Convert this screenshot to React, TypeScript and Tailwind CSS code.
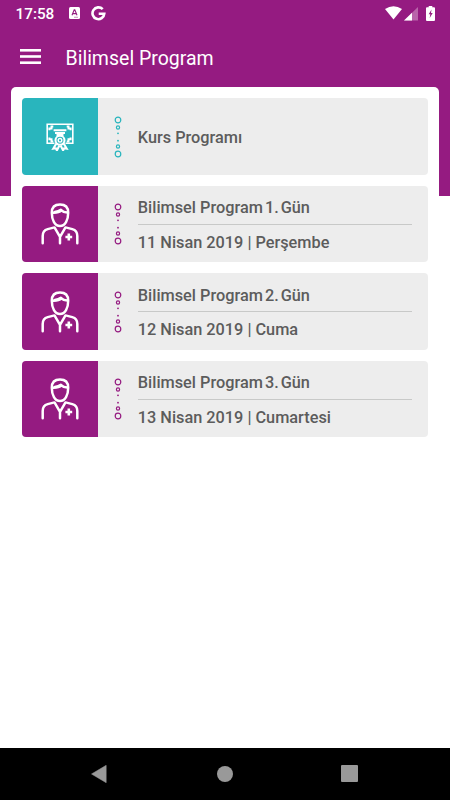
interface ProgramItem {
  id: string;
  title: string;
  day?: string;
  date?: string;
}

const PROGRAMS: ProgramItem[] = [
  { id: '1', title: 'Kurs Programı' },
  { id: '2', title: 'Bilimsel Program', day: ' 1. Gün', date: '11 Nisan 2019 | Perşembe' },
  { id: '3', title: 'Bilimsel Program', day: ' 2. Gün', date: '12 Nisan 2019 | Cuma' },
  { id: '4', title: 'Bilimsel Program', day: ' 3. Gün', date: '13 Nisan 2019 | Cumartesi' },
];

const StatusBar = () => (
  <div className="flex h-7 items-center pl-[15.5px] pr-[15.5px] text-white">
    <span className="w-[53.5px] text-[15.3px] font-medium leading-7">17:58</span>
    <svg width="11" height="12" viewBox="0 0 11 12" className="-mt-0.5">
      <rect width="11" height="12" rx="1.5" fill="#fff" />
      <path d="M3 8.3 5.2 2.8h.6L8 8.3M3.8 6.6h3.4M5.5 10.2h1M7.5 10.2h1" fill="none" stroke="#951b81" strokeWidth="1.1" />
    </svg>
    <svg width="15" height="15" viewBox="0 0 15 15" className="-mt-0.5 ml-[11px]">
      <path d="M11.7 3.2A5.9 5.9 0 1 0 13.3 7.7H7.7" fill="none" stroke="#fff" strokeWidth="2.6" />
    </svg>
    <svg width="17" height="14" viewBox="0 0 17 14" className="-mt-0.5 ml-auto">
      <path d="M0 3Q8.5-2.6 17 3L8.5 13.5Z" fill="#fff" />
    </svg>
    <svg width="14" height="14" viewBox="0 0 14 14" className="ml-0.5">
      <path d="M14 0V13.5H0Z" fill="#b965aa" />
      <path d="M8 5.8V13.5H0Z" fill="#fff" />
    </svg>
    <svg width="9" height="15" viewBox="0 0 9 15" className="-mt-0.5 ml-[7.5px]">
      <path d="M2.7 0h3.6v1.3H8q1 0 1 1V14q0 1-1 1H1q-1 0-1-1V2.3q0-1 1-1h1.7Z" fill="#fff" />
      <path d="M5.5 3.6 2.7 8.2h1.6l-.6 3.7L6.7 7H5Z" fill="#951b81" />
    </svg>
  </div>
);

const CertificateIcon = () => (
  <svg width="28" height="28" viewBox="0 0 28 28" fill="none" stroke="#fff">
    <path d="M8.5 20.3H1.2V1.2H26.8V20.3H19.5" strokeWidth="1.6" />
    <path d="M3.4 7.3V5.5H5.5V3.4H7.3M20.7 3.4h1.8v2.1h2.1v1.8M3.4 14.5v1.8h2.1v2.1h1.8M24.6 14.5v1.8h-2.1v2.1h-1.8" strokeWidth="2" />
    <path d="M7.6 7.2h12.8M9 10h10M10.5 12h7" strokeWidth="1.9" />
    <path d="m10.3 20.5-3 5.2 2.6-.4 1 2.1 2.5-4.9M17.7 20.5l3 5.2-2.6-.4-1 2.1-2.5-4.9" strokeWidth="2.1" />
    <circle cx="14" cy="17.3" r="4.5" fill="#29b5bd" strokeWidth="2.1" />
    <circle cx="14" cy="17.3" r="1.8" strokeWidth="1.4" />
  </svg>
);

const DoctorIcon = () => (
  <svg width="38" height="42" viewBox="0 0 38 42" fill="none" stroke="#fff" strokeWidth="2.5" strokeLinecap="round" strokeLinejoin="round">
    <path d="M10.8 9.8C10.8 4.2 14 1.6 19 1.6s8.2 2.6 8.2 8.2c0 7.2-3 13.2-8.2 13.2s-8.2-6-8.2-13.2Z" />
    <path d="M11.2 9.8c3.2.2 7.2-.4 9.3-2.4 1.2 1.4 3 2 5.8 2.2" />
    <path d="M13.7 9c2.4-.2 4.6-.9 6.2-2.2" />
    <path d="M1.7 40.3V33c0-4 1.5-6 5-6.9l6.8-1.7L19 33.8l5.5-9.4 6.8 1.7c3.5.9 5 2.9 5 6.9v7.3M19 33.8v6.5" />
    <path d="M27.8 30.6v6.8M24.4 34h6.8" strokeWidth="2.6" strokeLinecap="butt" />
  </svg>
);

const Dots = () => (
  <svg width="8" height="42" viewBox="0 0 8 42" fill="none" stroke="currentColor" strokeWidth="1.2">
    <circle cx="4" cy="4" r="2.8" />
    <circle cx="4" cy="11.5" r="1.6" />
    <circle cx="4" cy="17.3" r="0.9" fill="currentColor" stroke="none" />
    <circle cx="4" cy="24.7" r="0.9" fill="currentColor" stroke="none" />
    <circle cx="4" cy="30.5" r="1.6" />
    <circle cx="4" cy="38" r="2.8" />
  </svg>
);

const ProgramCard = ({ item }: { item: ProgramItem }) => {
  const isCourse = !item.date;

  return (
    <div className="flex h-[76.5px] overflow-hidden rounded-[4px] bg-[#ededed]">
      <div className={`flex w-[76.5px] shrink-0 items-center justify-center ${isCourse ? 'bg-[#29b5bd]' : 'bg-[#951b81]'}`}>
        {isCourse ? <CertificateIcon /> : <DoctorIcon />}
      </div>
      <div className={`flex w-[39.5px] shrink-0 items-center justify-center ${isCourse ? 'text-[#29b5bd]' : 'text-[#951b81]'}`}>
        <Dots />
      </div>
      <div className="mr-4 flex flex-1 flex-col justify-center whitespace-nowrap text-[16.3px] font-medium text-[#5c5c5c]">
        <div className={isCourse ? 'pt-[3px] leading-8' : 'h-[33.5px] pt-[2.2px] leading-8'}>
          {item.title}
          {item.day && <span className="[word-spacing:-2px]">{item.day}</span>}
        </div>
        {item.date && <div className="h-[34.5px] border-t border-[#c8c9c8] leading-[36.5px]">{item.date}</div>}
      </div>
    </div>
  );
};

const NavBar = () => (
  <div className="flex h-[52.5px] items-center justify-between bg-black pl-[91px] pr-[92.5px]">
    <svg width="16" height="18" viewBox="0 0 16 18">
      <path d="M15.2.3V17.7L.5 9Z" fill="#999" stroke="#999" strokeWidth=".5" strokeLinejoin="round" />
    </svg>
    <div className="ml-0.5 size-4 rounded-full bg-[#999]" />
    <div className="size-[17px] rounded-[1px] bg-[#999]" />
  </div>
);

export default function App() {
  return (
    <div className="flex h-screen flex-col bg-white font-[Roboto,sans-serif]">
      <header className="h-[196.4px] shrink-0 bg-[#951b81]">
        <StatusBar />
        <div className="flex h-[59px] items-center pl-5 text-white">
          <svg width="21" height="15" viewBox="0 0 21 15" className="-mt-0.5" fill="#fff">
            <rect width="21" height="2.6" y="0" />
            <rect width="21" height="2.6" y="6.2" />
            <rect width="21" height="2.6" y="12.4" />
          </svg>
          <h1 className="ml-[24.5px] pt-0.5 text-[19.5px] leading-6">Bilimsel Program</h1>
        </div>
      </header>
      <main className="mx-[11px] -mt-[109.4px] flex flex-1 flex-col gap-[11px] rounded-t-[5px] bg-white pl-[10.8px] pr-[11px] pt-[11.3px]">
        {PROGRAMS.map((item) => (
          <ProgramCard key={item.id} item={item} />
        ))}
      </main>
      <NavBar />
    </div>
  );
}
